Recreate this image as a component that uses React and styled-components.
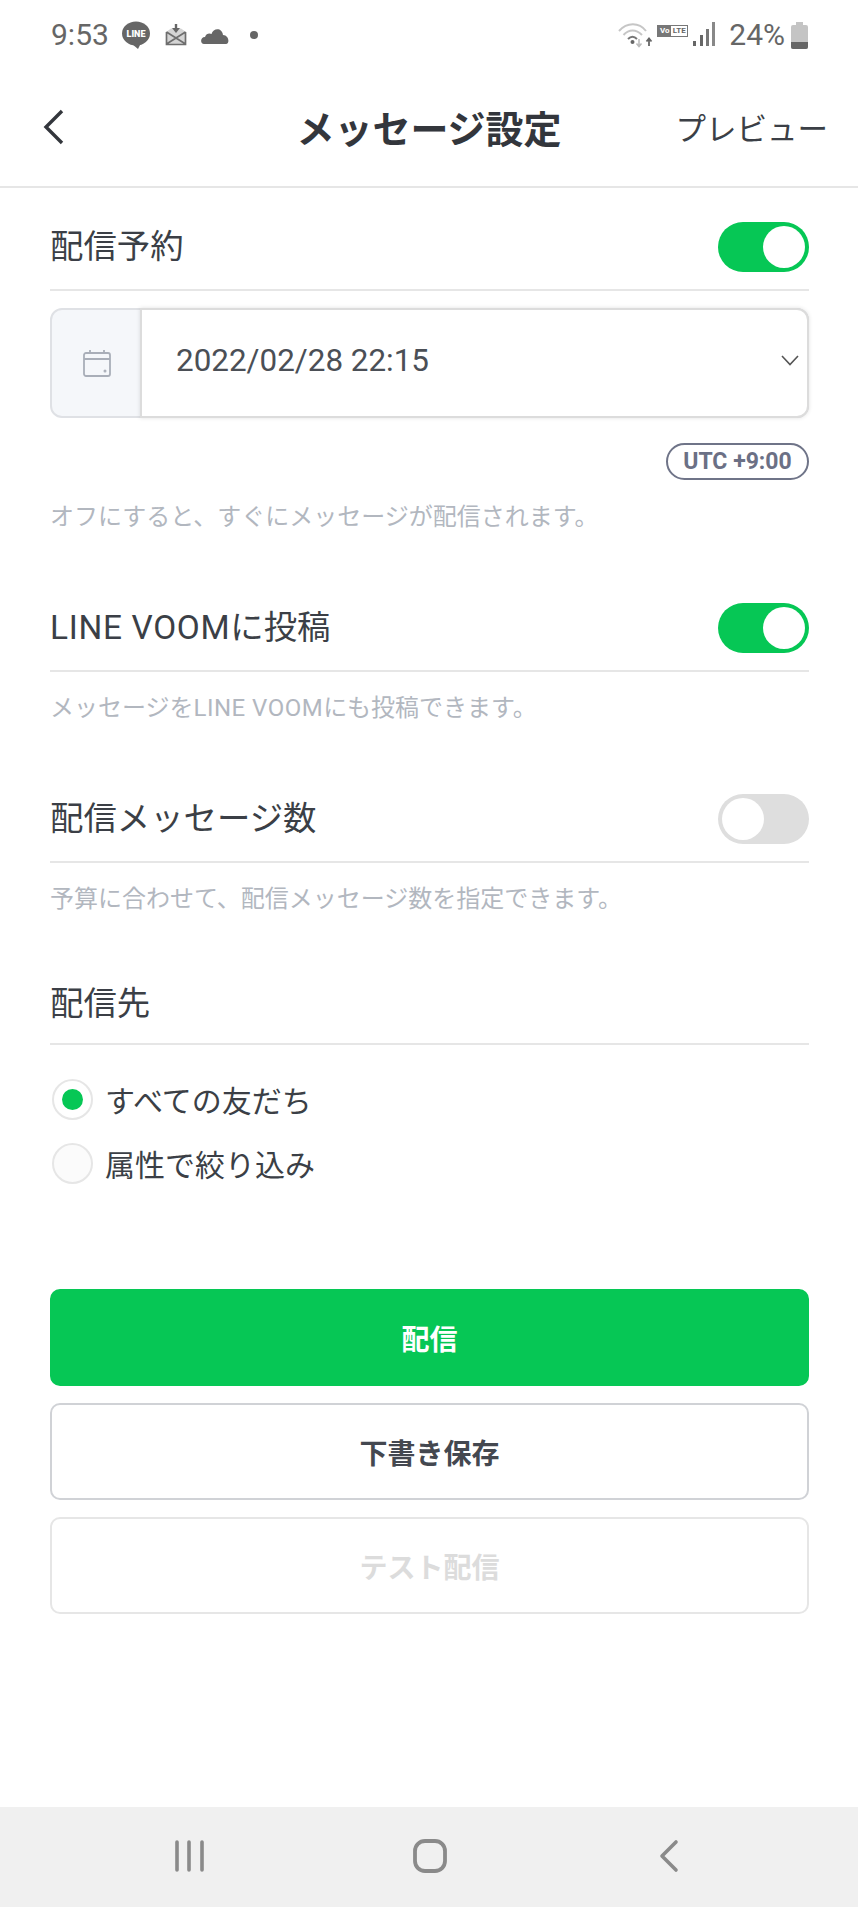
import React from "react";
import styled, { createGlobalStyle } from "styled-components";

const GlobalStyle = createGlobalStyle`
  html, body {
    margin: 0;
    padding: 0;
    background: #fff;
    font-family: Roboto, "Noto Sans CJK JP", sans-serif;
  }
  * { box-sizing: border-box; }
`;

const Page = styled.div`
  width: 858px;
  height: 1907px;
  display: flex;
  flex-direction: column;
  background: #fff;
  color: #3b3f46;
`;

const StatusBar = styled.div`
  height: 70px;
  padding: 0 50px 0 51px;
  display: flex;
  align-items: center;
  justify-content: space-between;
  color: #666;
`;

const StatusGroup = styled.div`
  display: flex;
  align-items: center;
`;

const StatusText = styled.span`
  margin-left: ${(p) => p.$left || 0}px;
  font-size: 30px;
  line-height: 32px;
  color: #666;
`;

const NavBar = styled.header`
  height: 118px;
  padding: 0 30px 3px;
  display: grid;
  grid-template-columns: 1fr auto 1fr;
  align-items: center;
  border-bottom: 2px solid #e6e6e6;
`;

const BackButton = styled.div`
  margin-left: 12px;
  display: flex;
  align-items: center;
`;

const Title = styled.h1`
  margin: 0;
  font-size: 38px;
  font-weight: 700;
  color: #33363c;
`;

const Preview = styled.div`
  justify-self: end;
  font-size: 30.5px;
  color: #3b3f46;
`;

const Content = styled.main`
  flex: 1;
  padding: 0 49px 0 50px;
  display: flex;
  flex-direction: column;
`;

const Row = styled.div`
  margin-top: ${(p) => p.$top}px;
  height: 68px;
  padding-bottom: ${(p) => p.$pad || 18}px;
  display: flex;
  align-items: center;
  justify-content: space-between;
  border-bottom: 2px solid #e6e6e6;
`;

const Label = styled.div`
  font-size: 33.4px;
  line-height: 50px;
  color: #3b3f46;
`;

const Latin = styled.span`
  letter-spacing: 0.02em;
`;

const Toggle = styled.div`
  width: 91px;
  height: 50px;
  padding: 4px;
  border-radius: 25px;
  display: flex;
  justify-content: ${(p) => (p.$on ? "flex-end" : "flex-start")};
  background: ${(p) => (p.$on ? "#06c755" : "#dedede")};
`;

const Knob = styled.div`
  width: 42px;
  height: 42px;
  border-radius: 50%;
  background: #fff;
`;

const DateBox = styled.div`
  margin-top: 17px;
  height: 110px;
  display: flex;
  border: 2px solid #dfe1e5;
  border-radius: 12px;
  background: #f5f7fa;
`;

const DateIcon = styled.div`
  width: 90px;
  display: flex;
  align-items: center;
  justify-content: center;
`;

const DateSelect = styled.div`
  flex: 1;
  margin: -2px;
  padding: 0 8px 6px 34px;
  display: flex;
  align-items: center;
  justify-content: space-between;
  background: #fff;
  border-radius: 0 12px 12px 0;
  border: 2px solid #dcdcdc;
  box-shadow: 0 0 4px rgba(0, 0, 0, 0.12);
  font-size: 31.4px;
  color: #4b4f56;
`;

const ZoneRow = styled.div`
  margin-top: 25px;
  display: flex;
  justify-content: flex-end;
`;

const ZonePill = styled.div`
  width: 143px;
  height: 37px;
  padding-bottom: 1px;
  display: flex;
  align-items: center;
  justify-content: center;
  border: 2px solid #6f7488;
  border-radius: 19px;
  font-size: 23px;
  font-weight: 700;
  color: #6b7085;
`;

const Hint = styled.p`
  margin: ${(p) => p.$top}px 0 0;
  font-size: 24px;
  line-height: 34px;
  color: #b2b7bf;
`;

const RadioList = styled.div`
  margin-top: 33px;
  display: flex;
  flex-direction: column;
  gap: 22px;
`;

const RadioRow = styled.div`
  height: 42px;
  padding-left: 2px;
  display: flex;
  align-items: center;
  gap: 12px;
  font-size: 30px;
  color: #3b3f46;
`;

const RadioCircle = styled.div`
  width: 41px;
  height: 41px;
  display: flex;
  align-items: center;
  justify-content: center;
  border-radius: 50%;
  border: 2px solid #e6e6e6;
  background: ${(p) => (p.$checked ? "#fff" : "#fbfbfb")};
`;

const RadioDot = styled.div`
  width: 21px;
  height: 21px;
  border-radius: 50%;
  background: #06c755;
`;

const Buttons = styled.div`
  margin-top: 105px;
  display: flex;
  flex-direction: column;
  gap: 17px;
`;

const Button = styled.div`
  height: 97px;
  display: flex;
  align-items: center;
  justify-content: center;
  border-radius: 10px;
  border: 2px solid ${(p) => (p.$primary ? "#06c755" : p.$disabled ? "#e6e6e6" : "#d0d2d6")};
  background: ${(p) => (p.$primary ? "#06c755" : "#fff")};
  color: ${(p) => (p.$primary ? "#fff" : p.$disabled ? "#dcdcdc" : "#444850")};
  font-size: 28px;
  font-weight: 700;
`;

const BottomNav = styled.nav`
  height: 100px;
  padding-bottom: 2px;
  display: grid;
  grid-template-columns: 380px 100px 1fr;
  align-items: center;
  justify-items: center;
  background: #f0f0f0;
`;

const LineBadge = () => (
  <svg width="30" height="28" viewBox="0 0 30 28" style={{ marginLeft: 12 }}>
    <ellipse cx="15" cy="12.5" rx="14" ry="12" fill="#666" />
    <path d="M11 23 L17 28 L20 22 Z" fill="#666" />
    <text x="15" y="16" textAnchor="middle" fontSize="9" fontWeight="900" fontFamily="Roboto" fill="#fff">
      LINE
    </text>
  </svg>
);

const MailIcon = () => (
  <svg width="22" height="22" viewBox="0 0 22 22" fill="none" style={{ marginLeft: 14 }}>
    <path d="M1 8 L6 4.5 H16 L21 8 V21 H1 Z" fill="#d4d4d4" />
    <path d="M1.5 8 V20.5 H20.5 V8 M1.5 8 L20.5 20 M20.5 8 L1.5 20" stroke="#6e6e6e" strokeWidth="1.7" />
    <path d="M11 0 V6" stroke="#666" strokeWidth="2.4" />
    <path d="M7 4 L11 9 L15 4 Z" fill="#666" />
  </svg>
);

const CloudIcon = () => (
  <svg width="28" height="17" viewBox="0 0 28 17" style={{ marginLeft: 14 }}>
    <path d="M3 17 C-1 17 -1 10 4 10 C5 6 9 6 10.5 7 C12 1 21 0 22 8 C28 8 29 17 25 17 Z" fill="#666" />
  </svg>
);

const Dot = styled.span`
  width: 8px;
  height: 8px;
  margin-left: 21px;
  border-radius: 50%;
  background: #666;
`;

const WifiIcon = () => (
  <svg width="36" height="26" viewBox="0 0 36 26" fill="none">
    <path d="M1 9 C9 0 21 0 28 9" stroke="#c6c6c6" strokeWidth="2" />
    <path d="M5.5 13 C11 7 18 7 24 13" stroke="#c6c6c6" strokeWidth="2" />
    <path d="M10 17 C13 14 16 14 19 17" stroke="#777" strokeWidth="2" />
    <circle cx="14.5" cy="20" r="2" fill="#666" />
    <path d="M21 17 V24 M18.5 21.5 L21 24.5 L23.5 21.5" stroke="#bbb" strokeWidth="1.5" />
    <path d="M31 24 V17 M28.5 19.5 L31 16.5 L33.5 19.5" stroke="#666" strokeWidth="1.8" />
  </svg>
);

const VoLteBadge = styled.span`
  width: 31px;
  height: 12px;
  margin: 0 0 8px 3px;
  display: flex;
  align-items: center;
  border: 1px solid #777;
  background: linear-gradient(90deg, #777 45%, #fff 45%);
  font-size: 0;
`;

const VoText = styled.span`
  width: ${(p) => p.$width}px;
  text-align: center;
  font-size: 8px;
  line-height: 10px;
  font-weight: 700;
  color: ${(p) => p.$color};
`;

const SignalIcon = () => (
  <svg width="24" height="24" viewBox="0 0 24 24" fill="#666" style={{ marginLeft: 4, marginTop: -2 }}>
    <rect x="1" y="19" width="3" height="5" />
    <rect x="8" y="13" width="3" height="11" />
    <rect x="14" y="7" width="3" height="17" fill="#777" />
    <rect x="20" y="0" width="3" height="24" fill="#888" />
  </svg>
);

const BatteryIcon = () => (
  <svg width="17" height="27" viewBox="0 0 17 27" style={{ marginLeft: 6 }}>
    <rect x="5" y="0" width="7" height="4" fill="#c4c4c4" />
    <rect x="0" y="3" width="17" height="24" rx="2" fill="#c4c4c4" />
    <path d="M0 20 H17 V25 a2 2 0 0 1 -2 2 H2 a2 2 0 0 1 -2 -2 Z" fill="#666" />
  </svg>
);

const App = () => {
  return (
    <Page>
      <GlobalStyle />
      <StatusBar>
        <StatusGroup>
          <StatusText>9:53</StatusText>
          <LineBadge />
          <MailIcon />
          <CloudIcon />
          <Dot />
        </StatusGroup>
        <StatusGroup>
          <WifiIcon />
          <VoLteBadge>
            <VoText $color="#fff" $width={13}>Vo</VoText>
            <VoText $color="#666" $width={16}>LTE</VoText>
          </VoLteBadge>
          <SignalIcon />
          <StatusText $left={13}>24%</StatusText>
          <BatteryIcon />
        </StatusGroup>
      </StatusBar>

      <NavBar>
        <BackButton>
          <svg width="24" height="36" viewBox="0 0 24 36" fill="none" stroke="#33363c" strokeWidth="3.4">
            <path d="M20 2 L4 18 L20 34" />
          </svg>
        </BackButton>
        <Title>メッセージ設定</Title>
        <Preview>プレビュー</Preview>
      </NavBar>

      <Content>
        <Row $top={35}>
          <Label>配信予約</Label>
          <Toggle $on>
            <Knob />
          </Toggle>
        </Row>
        <DateBox>
          <DateIcon>
            <svg width="28" height="28" viewBox="0 0 28 28" fill="none" stroke="#a9aeb8" strokeWidth="1.8">
              <rect x="1" y="4" width="26" height="23" rx="2" />
              <path d="M1 10 H27 M7 1 V4 M21 1 V4" />
              <circle cx="22" cy="22" r="0.6" />
            </svg>
          </DateIcon>
          <DateSelect>
            2022/02/28 22:15
            <svg width="18" height="11" viewBox="0 0 18 11" fill="none" stroke="#555" strokeWidth="1.6">
              <path d="M1 1 L9 9.5 L17 1" />
            </svg>
          </DateSelect>
        </DateBox>
        <ZoneRow>
          <ZonePill>UTC +9:00</ZonePill>
        </ZoneRow>
        <Hint $top={20}>オフにすると、すぐにメッセージが配信されます。</Hint>

        <Row $top={70}>
          <Label>
            <Latin>LINE VOOM</Latin>に投稿
          </Label>
          <Toggle $on>
            <Knob />
          </Toggle>
        </Row>
        <Hint $top={19}>
          メッセージを<Latin>LINE VOOM</Latin>にも投稿できます。
        </Hint>

        <Row $top={70}>
          <Label>配信メッセージ数</Label>
          <Toggle>
            <Knob />
          </Toggle>
        </Row>
        <Hint $top={19}>予算に合わせて、配信メッセージ数を指定できます。</Hint>

        <Row $top={61} $pad={12}>
          <Label>配信先</Label>
        </Row>
        <RadioList>
          <RadioRow>
            <RadioCircle $checked>
              <RadioDot />
            </RadioCircle>
            すべての友だち
          </RadioRow>
          <RadioRow>
            <RadioCircle />
            属性で絞り込み
          </RadioRow>
        </RadioList>

        <Buttons>
          <Button $primary>配信</Button>
          <Button>下書き保存</Button>
          <Button $disabled>テスト配信</Button>
        </Buttons>
      </Content>

      <BottomNav>
        <svg width="32" height="32" viewBox="0 0 32 32" fill="none" stroke="#8a8a8a" strokeWidth="3.6" strokeLinecap="round">
          <path d="M3 2 V30 M15 2 V30 M28 2 V30" />
        </svg>
        <svg width="36" height="36" viewBox="0 0 36 36" fill="none" stroke="#8a8a8a" strokeWidth="3.8">
          <rect x="3" y="3" width="30" height="30" rx="10" />
        </svg>
        <svg width="22" height="34" viewBox="0 0 22 34" fill="none" stroke="#8a8a8a" strokeWidth="3.6" strokeLinecap="round" strokeLinejoin="round">
          <path d="M18 3 L4 17 L18 31" />
        </svg>
      </BottomNav>
    </Page>
  );
};

export default App;
